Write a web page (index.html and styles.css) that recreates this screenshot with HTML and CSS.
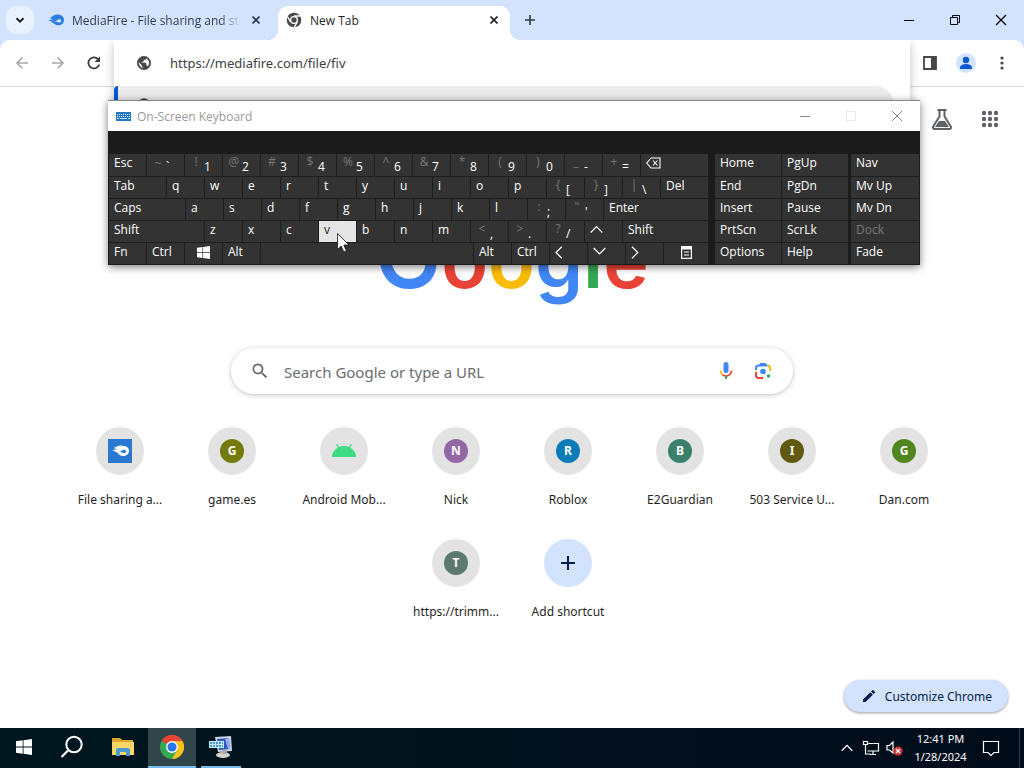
FILE: index.html
```html
<!DOCTYPE html>
<html lang="en">
<head>
    <meta charset="UTF-8">
    <meta name="viewport" content="width=device-width, initial-scale=1.0">
    <title>New Tab</title>
    <link rel="stylesheet" href="styles.css">
</head>
<body>
    <header class="tab-strip">
        <button class="tab-search" aria-label="Search tabs">
            <svg width="12" height="12" viewBox="0 0 12 12"><path d="M2.5 4.2L6 7.7l3.5-3.5" fill="none" stroke="#1f1f1f" stroke-width="2"/></svg>
        </button>
        <div class="tab">
            <svg class="tab-icon" width="16" height="16" viewBox="0 0 24 20"><path d="M0 12C3 9 5 10 8 9 6 8 4 8 3 8c4-5 9-7 14-6 5 1 7 4 7 8s-3 8-8 8c-4 0-6-2-9-4-2-2-4-3-7-2z" fill="#2a7de1"/><path d="M9 12c4 1 5-4 9-3 3 1 2 5-1 5-2 0-3-2-8-2z" fill="#d3e3fd"/></svg>
            <span class="tab-title fade">MediaFire - File sharing and storage</span>
            <button class="tab-close" aria-label="Close tab"><svg width="8" height="8" viewBox="0 0 8 8"><path d="M.5.5l7 7M7.500.5l-7 7" stroke="#303a4d" stroke-width="1.600"/></svg></button>
        </div>
        <div class="tab active">
            <svg class="tab-icon" width="16" height="16" viewBox="0 0 24 24"><circle cx="12" cy="12" r="11" fill="#474747"/><circle cx="12" cy="12" r="5" fill="#474747" stroke="#fff" stroke-width="2"/><path d="M12 6h10M6.800 15L2 6.500M17 15l-5 8.500" stroke="#fff" stroke-width="2"/></svg>
            <span class="tab-title">New Tab</span>
            <button class="tab-close" aria-label="Close tab"><svg width="8" height="8" viewBox="0 0 8 8"><path d="M.5.5l7 7M7.500.5l-7 7" stroke="#1f1f1f" stroke-width="1.600"/></svg></button>
        </div>
        <button class="new-tab" aria-label="New tab"><svg width="12" height="12" viewBox="0 0 12 12"><path d="M6 1v10M1 6h10" stroke="#303a4d" stroke-width="1.600"/></svg></button>
        <div class="window-buttons">
            <button aria-label="Minimize"><svg width="12" height="12" viewBox="0 0 12 12"><path d="M1 6.500h10" stroke="#000"/></svg></button>
            <button aria-label="Restore"><svg width="12" height="12" viewBox="0 0 12 12"><path d="M1.500 3.500h7v7h-7zM3.500 3V1.500h7v7H9" fill="none" stroke="#000"/></svg></button>
            <button aria-label="Close"><svg width="12" height="12" viewBox="0 0 12 12"><path d="M1 1l10 10M11 1L1 11" stroke="#000" stroke-width="1.200"/></svg></button>
        </div>
    </header>

    <div class="toolbar-back">
        <div class="toolbar">
            <button class="tool" aria-label="Back"><svg width="14" height="14" viewBox="0 0 14 14"><path d="M13 7H2M7.500 1.500L2 7l5.500 5.500" fill="none" stroke="#a9a9a9" stroke-width="1.600"/></svg></button>
            <button class="tool" aria-label="Forward"><svg width="14" height="14" viewBox="0 0 14 14"><path d="M1 7h11M6.500 1.500L12 7l-5.500 5.500" fill="none" stroke="#a9a9a9" stroke-width="1.600"/></svg></button>
            <button class="tool" aria-label="Reload"><svg width="14" height="14" viewBox="0 0 14 14"><path d="M12.200 8.500A5.500 5.500 0 1 1 11 3.200" fill="none" stroke="#3c3c3c" stroke-width="1.800"/><path d="M13 .5v5.500H7.500z" fill="#3c3c3c"/></svg></button>
            <div class="omnibox">
                <div class="omnibox-row">
                    <svg width="16" height="16" viewBox="0 0 24 24"><path d="M12 2C6.480 2 2 6.480 2 12s4.480 10 10 10 10-4.480 10-10S17.520 2 12 2zm-1 17.930c-3.950-.49-7-3.850-7-7.930 0-.62.080-1.210.21-1.790L9 15v1c0 1.100.9 2 2 2v1.930zm6.900-2.540c-.26-.81-1-1.390-1.900-1.390h-1v-3c0-.55-.45-1-1-1H8v-2h2c.55 0 1-.45 1-1V7h2c1.100 0 2-.9 2-2v-.41c2.930 1.190 5 4.060 5 7.410 0 2.080-.8 3.970-2.100 5.390z" fill="#474747" stroke="#474747"/></svg>
                    <input type="text" aria-label="Address" value="https://mediafire.com/file/fiv">
                </div>
                <div class="omnibox-row suggestion">
                    <svg width="16" height="16" viewBox="0 0 24 24"><circle cx="12" cy="12" r="10" fill="#474747"/></svg>
                    <span>https://mediafire.com/file/fiv</span>
                </div>
            </div>
            <div class="toolbar-right">
                <button class="tool" aria-label="Side panel"><svg width="16" height="16" viewBox="0 0 16 16"><path d="M2 2h12v12H2z" fill="none" stroke="#474747" stroke-width="1.800"/><path d="M9 2h5v12H9z" fill="#474747"/></svg></button>
                <button class="tool" aria-label="Profile"><svg width="20" height="20" viewBox="0 0 20 20"><circle cx="10" cy="10" r="10" fill="#d3e3fd"/><circle cx="10" cy="7" r="3.200" fill="#0b57d0"/><path d="M4 16v-1.500c0-2.300 3.500-3.500 6-3.500s6 1.200 6 3.500V16z" fill="#0b57d0"/></svg></button>
                <button class="tool" aria-label="Menu"><svg width="4" height="16" viewBox="0 0 4 16"><circle cx="2" cy="3" r="1.600" fill="#474747"/><circle cx="2" cy="8" r="1.600" fill="#474747"/><circle cx="2" cy="13" r="1.600" fill="#474747"/></svg></button>
            </div>
        </div>
    </div>

    <main class="page">
        <div class="page-links">
            <button aria-label="Search Labs"><svg width="24" height="24" viewBox="0 0 24 24"><path d="M7.500 3h9M9.500 3v6.500L3.200 19.500c-.7 1.300 0 2.500 1.300 2.500h15c1.300 0 2-1.200 1.300-2.500L14.500 9.500V3" fill="none" stroke="#5f6368" stroke-width="2"/><path d="M9 14h6l4 6H5z" fill="#5f6368"/></svg></button>
            <button aria-label="Google apps"><svg width="18" height="18" viewBox="0 0 18 18" fill="#5f6368"><circle cx="3" cy="3" r="2.200"/><circle cx="9" cy="3" r="2.200"/><circle cx="15" cy="3" r="2.200"/><circle cx="3" cy="9" r="2.200"/><circle cx="9" cy="9" r="2.200"/><circle cx="15" cy="9" r="2.200"/><circle cx="3" cy="15" r="2.200"/><circle cx="9" cy="15" r="2.200"/><circle cx="15" cy="15" r="2.200"/></svg></button>
        </div>
        <h1 class="logo"><span class="capital blue">G</span><span class="red">o</span><span class="yellow">o</span><span class="blue">g</span><span class="green">l</span><span class="red">e</span></h1>
        <div class="search-box">
            <svg width="20" height="20" viewBox="0 0 24 24"><path d="M15.500 14h-.79l-.28-.27A6.470 6.470 0 0 0 16 9.500 6.500 6.500 0 1 0 9.500 16c1.610 0 3.090-.59 4.230-1.570l.27.28v.79l5 4.990L20.490 19l-4.990-5zm-6 0C7.010 14 5 11.990 5 9.500S7.010 5 9.500 5 14 7.010 14 9.500 11.990 14 9.500 14z" fill="#5f6368"/></svg>
            <input type="text" aria-label="Search" placeholder="Search Google or type a URL">
            <button aria-label="Search by voice"><svg width="18" height="20" viewBox="0 0 18 20"><rect x="6.500" y="1" width="5" height="11" rx="2.500" fill="#4285f4"/><path d="M3.500 9.500c0 1.800.7 3.200 1.800 4.200" fill="none" stroke="#fbbc04" stroke-width="1.700"/><path d="M5.300 13.700c2.200 1.800 5.200 1.800 7.400 0 1.100-1 1.800-2.400 1.800-4.200" fill="none" stroke="#ea4335" stroke-width="1.700"/><path d="M9 15v3" stroke="#34a853" stroke-width="2"/></svg></button>
            <button aria-label="Search by image"><svg width="18" height="18" viewBox="0 0 18 18" fill="none" stroke-width="2"><path d="M2 8V6q0-2.500 2.500-2.500h9" stroke="#4285f4"/><path d="M6 3.500l1-1.500h4l1 1.500" stroke="#4285f4"/><path d="M13.500 3.500Q16 3.500 16 6v3" stroke="#fbbc04"/><path d="M2 10v3q0 3 2.500 3H9" stroke="#ea4335"/><circle cx="9" cy="9.500" r="2.800" fill="#4285f4"/><circle cx="14.500" cy="14" r="1.800" fill="#34a853"/></svg></button>
        </div>
        <nav class="shortcuts">
            <a class="shortcut" href="#">
                <span class="circle"><svg width="24" height="24" viewBox="0 0 24 24"><path d="M0 0h24v24H0z" fill="#2878d0"/><path d="M3 12c3-2 5-1 6-2-2 0-3-1-3-1 3-2 6-3 9-2 4 0 6 2 6 5s-3 5-6 5c-4 0-4-3-7-4-2-1-3-2-5-1z" fill="#fff"/><path d="M11 13c3 0 3-3 6-2 2 1 1 3-1 3s-2-1-5-1z" fill="#2878d0"/></svg></span>
                <span class="name">File sharing a...</span>
            </a>
            <a class="shortcut" href="#"><span class="circle"><span class="letter olive">G</span></span><span class="name">game.es</span></a>
            <a class="shortcut" href="#">
                <span class="circle"><svg width="24" height="24" viewBox="0 0 24 24"><path d="M0 18a12 11 0 0 1 24 0z" fill="#3ddc84"/><path d="M7 9L4.500 5M17 9l2.500-4" stroke="#3ddc84" stroke-width="1.200"/></svg></span>
                <span class="name">Android Mob...</span>
            </a>
            <a class="shortcut" href="#"><span class="circle"><span class="letter purple">N</span></span><span class="name">Nick</span></a>
            <a class="shortcut" href="#"><span class="circle"><span class="letter azure">R</span></span><span class="name">Roblox</span></a>
            <a class="shortcut" href="#"><span class="circle"><span class="letter teal">B</span></span><span class="name">E2Guardian</span></a>
            <a class="shortcut" href="#"><span class="circle"><span class="letter brown">I</span></span><span class="name">503 Service U...</span></a>
            <a class="shortcut" href="#"><span class="circle"><span class="letter leaf">G</span></span><span class="name">Dan.com</span></a>
            <a class="shortcut" href="#"><span class="circle"><span class="letter slate">T</span></span><span class="name">https://trimm...</span></a>
            <button class="shortcut"><span class="circle add"><svg width="14" height="14" viewBox="0 0 14 14"><path d="M7 0v14M0 7h14" stroke="#041e49" stroke-width="2"/></svg></span><span class="name">Add shortcut</span></button>
        </nav>
        <button class="customize">
            <svg width="16" height="16" viewBox="0 0 24 24"><path d="M3 17.250V21h3.750L17.810 9.940l-3.750-3.750L3 17.250zM20.710 7.040a1 1 0 0 0 0-1.410l-2.340-2.340a1 1 0 0 0-1.410 0l-1.830 1.830 3.750 3.750 1.830-1.830z" fill="#041e49"/></svg>
            Customize Chrome
        </button>
    </main>

    <footer class="taskbar">
        <button class="task" aria-label="Start"><svg width="16" height="16" viewBox="0 0 16 16"><path d="M0 2.300l6.700-1v6.200H0zM7.500 1.200L16 0v7.500H7.500zM0 8.400h6.700v6.300L0 13.800zM7.500 8.400H16V16l-8.500-1.200z" fill="#fff"/></svg></button>
        <button class="task" aria-label="Search"><svg width="24" height="24" viewBox="0 0 24 24"><circle cx="14" cy="9.500" r="7.700" fill="none" stroke="#fff" stroke-width="2"/><path d="M8.500 15L1.500 22" stroke="#fff" stroke-width="2.200"/></svg></button>
        <button class="task folder" aria-label="File Explorer"><svg width="22" height="20" viewBox="0 0 22 20"><path d="M0 1h8l2 2h11v6H0z" fill="#e2a52e"/><path d="M0 5h22v13H0z" fill="#fbd768"/><path d="M4 19v-6q0-2 2-2h10q2 0 2 2v6h-4v-4H8v4z" fill="#4a9bd3"/></svg></button>
        <button class="task current" aria-label="Google Chrome"><svg width="24" height="24" viewBox="0 0 24 24"><circle cx="12" cy="12" r="12" fill="#34a853"/><path d="M12 12L1.600 6A12 12 0 0 1 22.400 6z" fill="#ea4335"/><path d="M12 0A12 12 0 0 1 22.400 6H12z" fill="#ea4335"/><path d="M22.400 6A12 12 0 0 1 12 24l5.200-9L12 6z" fill="#fbc116"/><circle cx="12" cy="12" r="6" fill="#fff"/><circle cx="12" cy="12" r="4.600" fill="#2779e8"/></svg></button>
        <button class="task running" aria-label="On-Screen Keyboard"><svg width="24" height="24" viewBox="0 0 24 24"><path d="M6 2l16-1 1 15-14 1z" fill="#cfd5e2"/><path d="M8 4l12-1 1 11-11 1z" fill="#3157bd"/><path d="M16 4l4-1 1 11-2 0z" fill="#91aef0"/><path d="M0 6h15v7H0z" fill="#c7e8fa"/><path d="M1 8h13M1 11h13" stroke="#197abe" stroke-width="1.500" stroke-dasharray="2 1"/><ellipse cx="14" cy="20" rx="7" ry="3" fill="#d5d2ca"/><path d="M13 15h5v4h-5z" fill="#aaa"/></svg></button>
        <div class="tray">
            <button class="more" aria-label="Show hidden icons"><svg width="12" height="8" viewBox="0 0 12 8"><path d="M.7 6.700L6 1.400l5.300 5.300" fill="none" stroke="#fff" stroke-width="1.300"/></svg></button>
            <button aria-label="Network"><svg width="18" height="16" viewBox="0 0 18 16" fill="none" stroke="#fff" stroke-width="1.200"><path d="M6 3.500h10.500v7.500H5.500M3.500 5v9h5M11 11v3.500M8 14.500h6M1.500 1.500h4v3h-4z"/></svg></button>
            <button aria-label="Volume"><svg width="18" height="16" viewBox="0 0 18 16"><path d="M1 5.500h2.500L7 2v11L3.500 10H1z" fill="none" stroke="#fff" stroke-width="1.200"/><circle cx="12" cy="11" r="4.500" fill="#d13438"/><path d="M10 9l4 4M14 9l-4 4" stroke="#fff" stroke-width="1.200"/></svg></button>
            <button class="clock"><span>12:41 PM</span><span>1/28/2024</span></button>
            <button class="notes" aria-label="Notifications"><svg width="18" height="18" viewBox="0 0 18 18"><path d="M1.500 2.500h15v11H12l-3 3-3-3H1.500z" fill="none" stroke="#fff" stroke-width="1.200"/></svg></button>
        </div>
    </footer>

    <!-- on-screen keyboard window -->
    <section class="osk">
        <div class="osk-title">
            <svg width="15" height="9" viewBox="0 0 15 9"><path d="M0 0h15v9H0z" fill="#2478c4"/><path d="M1 2.500h13M1 4.500h13" stroke="#cfe4f5" stroke-dasharray="1 1"/><path d="M1 6.500h2m1 0h7m1 0h2" stroke="#cfe4f5"/></svg>
            <span>On-Screen Keyboard</span>
            <div class="osk-buttons">
                <button aria-label="Minimize"><svg width="12" height="12" viewBox="0 0 12 12"><path d="M1 6.500h10" stroke="#888"/></svg></button>
                <button aria-label="Maximize" disabled><svg width="12" height="12" viewBox="0 0 12 12"><path d="M1.500 1.500h9v9h-9z" fill="none" stroke="#e8e8e8"/></svg></button>
                <button aria-label="Close"><svg width="12" height="12" viewBox="0 0 12 12"><path d="M1 1l10 10M11 1L1 11" stroke="#888"/></svg></button>
            </div>
        </div>
        <div class="osk-body">
            <div class="keys">
                <div class="key-row">
                    <button class="key">Esc</button>
                    <button class="key dual level"><i>~</i><b>`</b></button>
                    <button class="key dual"><i>!</i><b>1</b></button>
                    <button class="key dual"><i>@</i><b>2</b></button>
                    <button class="key dual"><i>#</i><b>3</b></button>
                    <button class="key dual"><i>$</i><b>4</b></button>
                    <button class="key dual"><i>%</i><b>5</b></button>
                    <button class="key dual"><i>^</i><b>6</b></button>
                    <button class="key dual"><i>&amp;</i><b>7</b></button>
                    <button class="key dual"><i>*</i><b>8</b></button>
                    <button class="key dual"><i>(</i><b>9</b></button>
                    <button class="key dual"><i>)</i><b>0</b></button>
                    <button class="key dual"><i>_</i><b>-</b></button>
                    <button class="key dual"><i>+</i><b>=</b></button>
                    <button class="key fill" aria-label="Backspace"><svg width="15" height="12" viewBox="0 0 15 12"><path d="M5 1h9v10H5L.8 6zM7 3.500l4.500 5M11.500 3.500L7 8.500" fill="none" stroke="#fff" stroke-width="1.100"/></svg></button>
                </div>
                <div class="key-row">
                    <button class="key tab-key">Tab</button>
                    <button class="key">q</button>
                    <button class="key">w</button>
                    <button class="key">e</button>
                    <button class="key">r</button>
                    <button class="key">t</button>
                    <button class="key">y</button>
                    <button class="key">u</button>
                    <button class="key">i</button>
                    <button class="key">o</button>
                    <button class="key">p</button>
                    <button class="key dual"><i>{</i><b>[</b></button>
                    <button class="key dual"><i>}</i><b>]</b></button>
                    <button class="key dual"><i>|</i><b>\</b></button>
                    <button class="key fill">Del</button>
                </div>
                <div class="key-row">
                    <button class="key caps-key">Caps</button>
                    <button class="key">a</button>
                    <button class="key">s</button>
                    <button class="key">d</button>
                    <button class="key">f</button>
                    <button class="key">g</button>
                    <button class="key">h</button>
                    <button class="key">j</button>
                    <button class="key">k</button>
                    <button class="key">l</button>
                    <button class="key dual"><i>:</i><b>;</b></button>
                    <button class="key dual"><i>"</i><b>'</b></button>
                    <button class="key fill">Enter</button>
                </div>
                <div class="key-row">
                    <button class="key shift-key">Shift</button>
                    <button class="key">z</button>
                    <button class="key">x</button>
                    <button class="key">c</button>
                    <button class="key pressed">v</button>
                    <button class="key">b</button>
                    <button class="key">n</button>
                    <button class="key">m</button>
                    <button class="key dual"><i>&lt;</i><b>,</b></button>
                    <button class="key dual"><i>&gt;</i><b>.</b></button>
                    <button class="key dual"><i>?</i><b>/</b></button>
                    <button class="key" aria-label="Up"><svg width="13" height="12" viewBox="0 0 13 12"><path d="M.7 8.500l5.800-6 5.800 6" fill="none" stroke="#fff" stroke-width="1.200"/></svg></button>
                    <button class="key fill">Shift</button>
                </div>
                <div class="key-row">
                    <button class="key">Fn</button>
                    <button class="key">Ctrl</button>
                    <button class="key icon" aria-label="Windows"><svg width="13" height="13" viewBox="0 0 16 16"><path d="M0 2.300l6.700-1v6.200H0zM7.500 1.200L16 0v7.500H7.500zM0 8.400h6.700v6.300L0 13.800zM7.500 8.400H16V16l-8.500-1.200z" fill="#fff"/></svg></button>
                    <button class="key">Alt</button>
                    <button class="key fill" aria-label="Space"></button>
                    <button class="key">Alt</button>
                    <button class="key">Ctrl</button>
                    <button class="key" aria-label="Left"><svg width="8" height="13" viewBox="0 0 8 13"><path d="M6.800.8L1 6.500l5.800 5.700" fill="none" stroke="#fff" stroke-width="1.200"/></svg></button>
                    <button class="key" aria-label="Down"><svg width="13" height="12" viewBox="0 0 13 12"><path d="M.7 2l5.800 6 5.800-6" fill="none" stroke="#fff" stroke-width="1.200"/></svg></button>
                    <button class="key" aria-label="Right"><svg width="8" height="13" viewBox="0 0 8 13"><path d="M1 .8l5.800 5.700L1 12.200" fill="none" stroke="#fff" stroke-width="1.200"/></svg></button>
                    <button class="key icon menu-key" aria-label="Menu"><svg width="11" height="13" viewBox="0 0 11 13"><path d="M.6.6h9.800v11.800H.6zM3 6h5M3 9h5" fill="none" stroke="#fff" stroke-width="1.200"/><path d="M0 0h11v3.500H0z" fill="#fff"/></svg></button>
                </div>
            </div>
            <div class="keys side">
                <div class="key-row"><button class="key">Home</button><button class="key">PgUp</button></div>
                <div class="key-row"><button class="key">End</button><button class="key">PgDn</button></div>
                <div class="key-row"><button class="key">Insert</button><button class="key">Pause</button></div>
                <div class="key-row"><button class="key">PrtScn</button><button class="key">ScrLk</button></div>
                <div class="key-row"><button class="key">Options</button><button class="key">Help</button></div>
            </div>
            <div class="keys nav-keys">
                <div class="key-row"><button class="key fill">Nav</button></div>
                <div class="key-row"><button class="key fill">Mv Up</button></div>
                <div class="key-row"><button class="key fill">Mv Dn</button></div>
                <div class="key-row"><button class="key fill" disabled>Dock</button></div>
                <div class="key-row"><button class="key fill">Fade</button></div>
            </div>
        </div>
    </section>

    <svg class="cursor" width="13" height="20" viewBox="0 0 13 20"><path d="M.5.5v16l3.700-3.500 2.600 6 2.600-1.100-2.600-5.900h5.200z" fill="#fff" stroke="#111" stroke-width=".8"/></svg>
</body>
</html>
```

FILE: styles.css
```css
* {
    box-sizing: border-box;
}
body {
    margin: 0;
    min-height: 100vh;
    display: flex;
    flex-direction: column;
    position: relative;
    background-color: #fff;
    color: #1f1f1f;
    font-family: "Noto Sans", "Open Sans", sans-serif;
    font-size: 12px;
}
button {
    display: flex;
    align-items: center;
    justify-content: center;
    padding: 0;
    border: none;
    background: none;
    color: inherit;
    font: inherit;
}
svg {
    display: block;
    flex: none;
}
input {
    flex: 1;
    min-width: 0;
    padding: 0;
    border: none;
    outline: none;
    background: none;
    color: inherit;
    font: inherit;
}

/* tab strip */
.tab-strip {
    display: flex;
    height: 40px;
    padding: 6px 0 0 6px;
    background-color: #d3e3fd;
    font-family: "Open Sans", sans-serif;
}
.tab-search {
    width: 28px;
    height: 28px;
    margin-right: 4px;
    border-radius: 10px;
    background-color: #e9f1fe;
}
.tab {
    display: flex;
    align-items: center;
    width: 232px;
    height: 28px;
    padding: 0 6px 0 10px;
    color: #303a4d;
}
.tab.active {
    position: relative;
    height: 34px;
    margin-left: 8px;
    padding: 0 8px 6px;
    border-radius: 10px 10px 0 0;
    background-color: #fff;
    color: #1f1f1f;
}
.tab.active::before,
.tab.active::after {
    content: "";
    position: absolute;
    bottom: 0;
    width: 10px;
    height: 10px;
}
.tab.active::before {
    right: 100%;
    background: radial-gradient(circle at 0 0, transparent 10px, #fff 10px);
}
.tab.active::after {
    left: 100%;
    background: radial-gradient(circle at 100% 0, transparent 10px, #fff 10px);
}
.tab-icon {
    margin-right: 8px;
}
.tab-title {
    flex: 1;
    overflow: hidden;
    white-space: nowrap;
}
.tab-title.fade {
    -webkit-mask-image: linear-gradient(to left, transparent, #000 20px);
    mask-image: linear-gradient(to left, transparent, #000 20px);
}
.tab-close {
    width: 16px;
    height: 16px;
    margin-left: 8px;
}
.new-tab {
    width: 28px;
    height: 28px;
    margin-left: 6px;
}
.window-buttons {
    display: flex;
    height: 28px;
    margin-left: auto;
}
.window-buttons button {
    width: 46px;
}

/* toolbar */
.toolbar-back {
    background-color: #d3e3fd;
}
.toolbar {
    display: flex;
    height: 47px;
    padding: 0 4px;
    border-bottom: 1px solid #dcdcdc;
    border-radius: 10px 10px 0 0;
    background-color: #fff;
}
.tool {
    width: 36px;
    height: 46px;
}
.omnibox {
    position: relative;
    z-index: 1;
    flex: 1;
    height: 100px;
    margin: 0 2px;
    border-radius: 0 0 12px 12px;
    background-color: #fff;
    box-shadow: 0 4px 10px rgba(0, 0, 0, 0.25);
    clip-path: inset(0 -14px -14px -14px);
    font-size: 13px;
}
.omnibox-row {
    display: flex;
    align-items: center;
    gap: 18px;
    height: 46px;
    padding-left: 22px;
    color: #3c4043;
}
.omnibox-row.suggestion {
    height: 38px;
    margin-right: 16px;
    padding-left: 18px;
    border-left: 4px solid #0b57d0;
    border-radius: 4px 19px 19px 0;
    background-color: #ebebeb;
}
.toolbar-right {
    display: flex;
}

/* new tab page */
.page {
    position: relative;
    flex: 1;
    display: flex;
    flex-direction: column;
    align-items: center;
}
.page-links {
    display: flex;
    align-self: flex-end;
    gap: 24px;
    height: 64px;
    padding-right: 22px;
}
.page-links button {
    width: 24px;
}
.logo {
    height: 197px;
    margin: 0;
    padding-top: 57px;
    line-height: 96px;
    font-family: Inter, sans-serif;
    font-size: 77px;
    font-weight: 600;
}
.logo .capital {
    font-size: 88px;
}
.blue {
    color: #4285f4;
}
.red {
    color: #ea4335;
}
.yellow {
    color: #fbbc05;
}
.green {
    color: #34a853;
}
.search-box {
    display: flex;
    align-items: center;
    width: 100%;
    max-width: 562px;
    height: 46px;
    padding: 0 20px 0 19px;
    border-radius: 23px;
    background-color: #fff;
    box-shadow: 0 1px 5px rgba(32, 33, 36, 0.28);
    font-size: 15px;
}
.search-box input {
    margin-left: 14px;
    padding-top: 2px;
}
.search-box input::placeholder {
    color: #6a6d71;
    opacity: 1;
}
.search-box button {
    width: 20px;
    margin-left: 17px;
}
.shortcuts {
    display: flex;
    flex-wrap: wrap;
    justify-content: center;
    max-width: 896px;
    margin-top: 17px;
}
.shortcut {
    display: flex;
    flex-direction: column;
    align-items: center;
    justify-content: flex-start;
    width: 112px;
    height: 112px;
    padding-top: 16px;
    color: #1f1f1f;
    text-decoration: none;
}
.circle {
    display: flex;
    align-items: center;
    justify-content: center;
    width: 48px;
    height: 48px;
    margin-bottom: 15px;
    border-radius: 50%;
    background-color: #e3e3e3;
}
.circle.add {
    background-color: #d3e3fd;
}
.letter {
    width: 24px;
    border-radius: 50%;
    color: #fff;
    font-weight: bold;
    line-height: 24px;
    text-align: center;
}
.olive {
    background-color: #757a0d;
}
.purple {
    background-color: #9367a5;
}
.azure {
    background-color: #0b7cb8;
}
.teal {
    background-color: #3a806a;
}
.brown {
    background-color: #625a10;
}
.leaf {
    background-color: #50861f;
}
.slate {
    background-color: #5c7b70;
}
.name {
    line-height: 20px;
    white-space: nowrap;
}
.customize {
    position: absolute;
    right: 16px;
    bottom: 16px;
    gap: 8px;
    height: 32px;
    padding: 0 16px 0 17px;
    border-radius: 16px;
    background-color: #d3e3fd;
    box-shadow: 0 1px 3px rgba(0, 0, 0, 0.4);
    color: #041e49;
}

/* taskbar */
.taskbar {
    display: flex;
    height: 40px;
    background: linear-gradient(to right, #02171f, #010c1b);
    color: #fff;
}
.task {
    width: 48px;
    border-bottom: 2px solid transparent;
}
.task.folder {
    margin-left: 3px;
}
.task.current {
    border-color: #76b9ed;
    background-color: #31454a;
}
.task.folder + .task {
    margin-left: 1px;
}
.task.running {
    width: 40px;
    margin-left: 5px;
    border-color: #76b9ed;
}
.tray {
    display: flex;
    gap: 6px;
    margin-left: auto;
    padding-right: 4px;
}
.more {
    width: 18px;
}
.clock {
    flex-direction: column;
    width: 61px;
    font-size: 11px;
    line-height: 18px;
}
.notes {
    width: 36px;
    padding-right: 8px;
}
.tray::after {
    content: "";
    border-right: 1px solid #35404b;
}

/* on-screen keyboard */
.osk {
    position: absolute;
    z-index: 2;
    top: 100px;
    left: 108px;
    width: 812px;
    border-top: 1px solid #8a8a8a;
    background-color: #1b1b1b;
    box-shadow: 0 2px 8px rgba(0, 0, 0, 0.5);
    font-family: "Open Sans", sans-serif;
}
.osk-title {
    display: flex;
    align-items: center;
    gap: 6px;
    height: 30px;
    padding-left: 8px;
    background-color: #fff;
    color: #999;
}
.osk-buttons {
    display: flex;
    margin-left: auto;
}
.osk-buttons button {
    width: 46px;
    height: 30px;
}
.osk-body {
    display: flex;
    padding: 23px 0 0 1px;
    color: #fff;
}
.keys {
    width: 600px;
}
.keys.side {
    width: 134px;
    margin-left: 6px;
}
.keys.nav-keys {
    flex: 1;
    margin-left: 2px;
}
.key-row {
    display: flex;
    height: 22px;
}
.key-row:first-child {
    height: 23px;
}
.key {
    flex: none;
    justify-content: flex-start;
    align-items: flex-start;
    width: 38px;
    padding: 1px 0 0 5px;
    border: solid #1d1d1d;
    border-width: 0 1px 1px 0;
    background-color: #333;
    line-height: 16px;
    white-space: nowrap;
}
.key.fill {
    flex: 1;
}
.key svg {
    margin-top: 2px;
}
.key.icon {
    justify-content: center;
    padding-left: 0;
}
.key.dual {
    padding: 0 0 0 3px;
}
.key i {
    width: 16px;
    color: #777;
    font-style: normal;
}
.key b {
    padding-top: 5px;
    font-weight: normal;
}
.key.level i {
    padding-top: 2px;
}
.tab-key {
    width: 58px;
}
.caps-key {
    width: 77px;
}
.shift-key {
    width: 96px;
}
.menu-key {
    width: 45px;
}
.side .key {
    width: 67px;
}
.pressed {
    background-color: #e5e5e5;
    color: #222;
}
.key:disabled {
    color: #777;
}
.cursor {
    position: absolute;
    z-index: 3;
    top: 233px;
    left: 337px;
}
```
